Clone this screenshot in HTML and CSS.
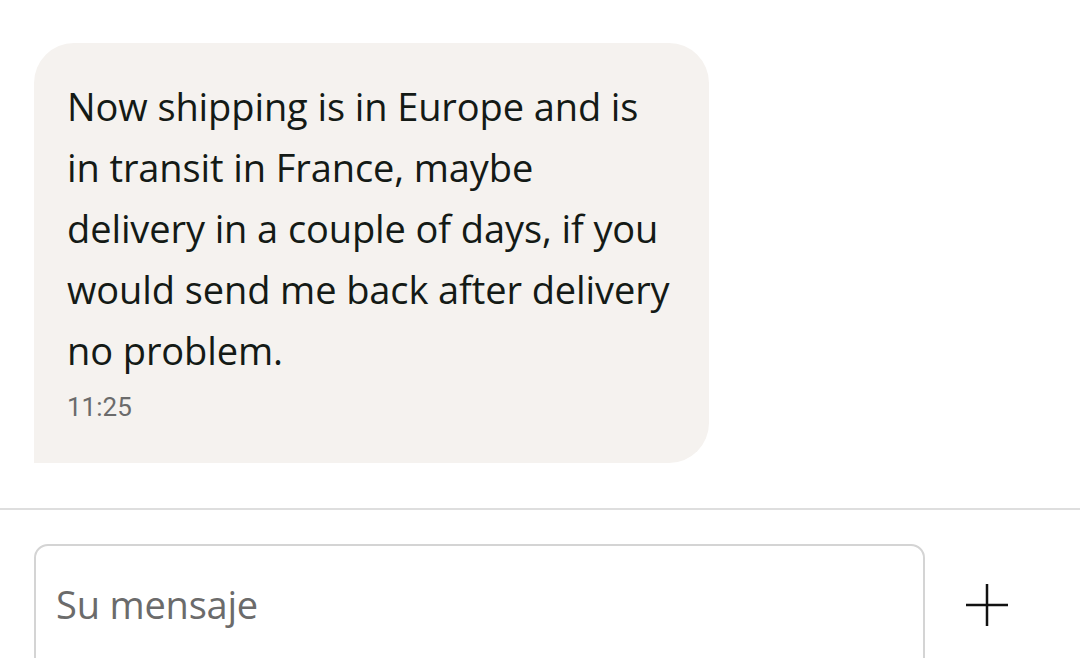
FILE: index.html
```html
<!DOCTYPE html>
<html lang="en">
<head>
    <meta charset="UTF-8">
    <meta name="viewport" content="width=device-width, initial-scale=1.0">
    <title>Chat</title>
    <link rel="stylesheet" href="styles.css">
</head>
<body>
    <div class="chat">
        <div class="messages">
            <div class="bubble">
                <p class="bubble-text">Now shipping is in Europe and is in transit in France, maybe delivery in a couple of days, if you would send me back after delivery no problem.</p>
                <span class="bubble-time">11:25</span>
            </div>
        </div>
        <div class="composer">
            <div class="input-box">
                <span class="placeholder">Su mensaje</span>
            </div>
            <button class="add-btn" aria-label="Add">
                <svg width="44" height="44" viewBox="0 0 44 44">
                    <path d="M22 1V43M1 22H43" stroke="#111" stroke-width="2.5" fill="none"/>
                </svg>
            </button>
        </div>
    </div>
</body>
</html>
```

FILE: styles.css
```css
body {
    margin: 0;
    background-color: #fff;
    font-family: "Open Sans", "Noto Sans", sans-serif;
    height: 658px;
    overflow: hidden;
}
.chat {
    display: flex;
    flex-direction: column;
}
.messages {
    padding: 43px 0 45px 34px;
    border-bottom: 2px solid #dedede;
}
.bubble {
    width: 675px;
    box-sizing: border-box;
    height: 420px;
    background-color: #f5f2ef;
    border-radius: 40px 40px 40px 0;
    padding: 33px 32px 0 33px;
}
.bubble-text {
    margin: 0;
    font-size: 38px;
    line-height: 61px;
    color: #141a16;
    letter-spacing: -0.1px;
}
.bubble-time {
    display: block;
    margin-top: 11px;
    font-family: Roboto, sans-serif;
    font-size: 26px;
    line-height: 30px;
    color: #6b6b6b;
}
.composer {
    display: flex;
    align-items: flex-start;
    padding: 34px 0 0 34px;
    gap: 40px;
}
.input-box {
    width: 891px;
    height: 140px;
    box-sizing: border-box;
    border: 2px solid #d4d4d4;
    border-radius: 14px;
    padding: 32px 20px;
    line-height: 52px;
}
.placeholder {
    font-size: 38px;
    color: #6b6b6b;
    letter-spacing: -0.2px;
}
.add-btn {
    border: none;
    background: none;
    padding: 0;
    margin-top: 39px;
    display: flex;
}
```
